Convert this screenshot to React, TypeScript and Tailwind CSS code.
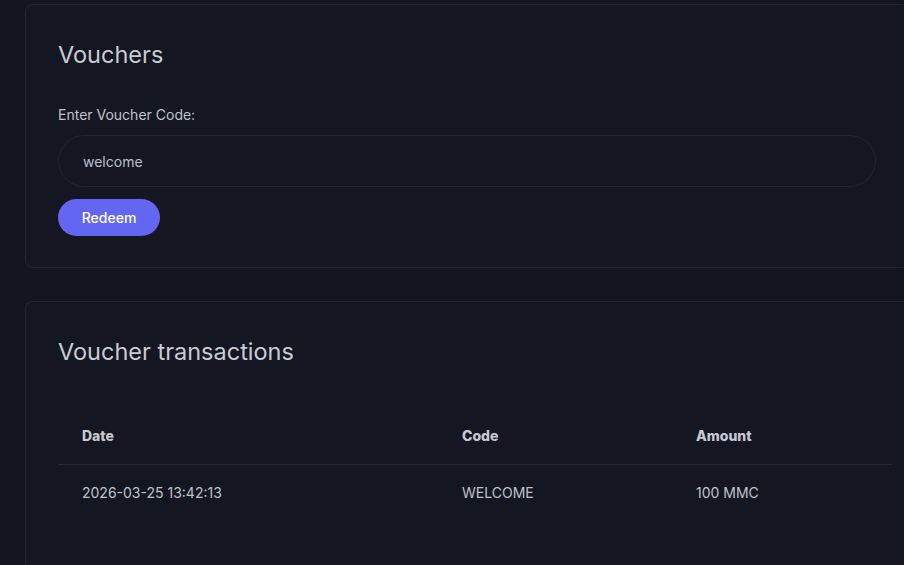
export default function App() {
  const rows = [{ date: "2026-03-25 13:42:13", code: "WELCOME", amount: "100 MMC" }];

  return (
    <div
      className="min-h-[565px] w-[904px] overflow-hidden bg-[#131620] pl-[25px] pt-[4px] text-[#c3c6ce]"
      style={{ fontFamily: "Inter, 'Noto Sans', sans-serif" }}
    >
      {/* Vouchers card */}
      <div className="w-[884px] rounded-[8px] border border-[#222632] bg-[#141721] px-[32px] pb-[31px] pt-[36px]">
        <h2 className="text-[23.5px] leading-[28px] font-normal text-[#c9ccd3]">Vouchers</h2>
        <label className="mt-[36px] block text-[14px] leading-[20px] text-[#c0c3cb]">Enter Voucher Code:</label>
        <input
          defaultValue="welcome"
          className="mt-[10px] block h-[52px] w-[818px] rounded-full border border-[#222632] bg-transparent px-[24px] text-[14px] text-[#bcc0c8] outline-none"
        />
        <button className="mt-[12px] h-[37px] w-[102px] rounded-full bg-[#6366f1] text-[14px] font-medium text-white">
          Redeem
        </button>
      </div>

      {/* Transactions card */}
      <div className="mt-[33px] w-[884px] rounded-t-[8px] border border-b-0 border-[#222632] bg-[#141721] px-[32px] pb-[44px] pt-[36px]">
        <h2 className="text-[23.5px] leading-[28px] font-normal text-[#c9ccd3]">Voucher transactions</h2>
        <table className="mt-[42px] w-[834px] table-fixed border-collapse text-left">
          <colgroup>
            <col className="w-[380px]" />
            <col className="w-[234px]" />
            <col className="w-[220px]" />
          </colgroup>
          <thead>
            <tr className="border-b border-[#252a37]">
              <th className="px-[24px] py-[18px] text-[14px] leading-[20px] font-extrabold text-[#c6c9d1]">Date</th>
              <th className="px-[24px] py-[18px] text-[14px] leading-[20px] font-extrabold text-[#c6c9d1]">Code</th>
              <th className="px-[24px] py-[18px] text-[14px] leading-[20px] font-extrabold text-[#c6c9d1]">Amount</th>
            </tr>
          </thead>
          <tbody>
            {rows.map((r) => (
              <tr key={r.date}>
                <td className="px-[24px] py-[18px] text-[14px] leading-[20px] text-[#bfc2ca]">{r.date}</td>
                <td className="px-[24px] py-[18px] text-[14px] leading-[20px] text-[#bfc2ca]">{r.code}</td>
                <td className="px-[24px] py-[18px] text-[14px] leading-[20px] text-[#bfc2ca]">{r.amount}</td>
              </tr>
            ))}
          </tbody>
        </table>
      </div>
    </div>
  );
}
